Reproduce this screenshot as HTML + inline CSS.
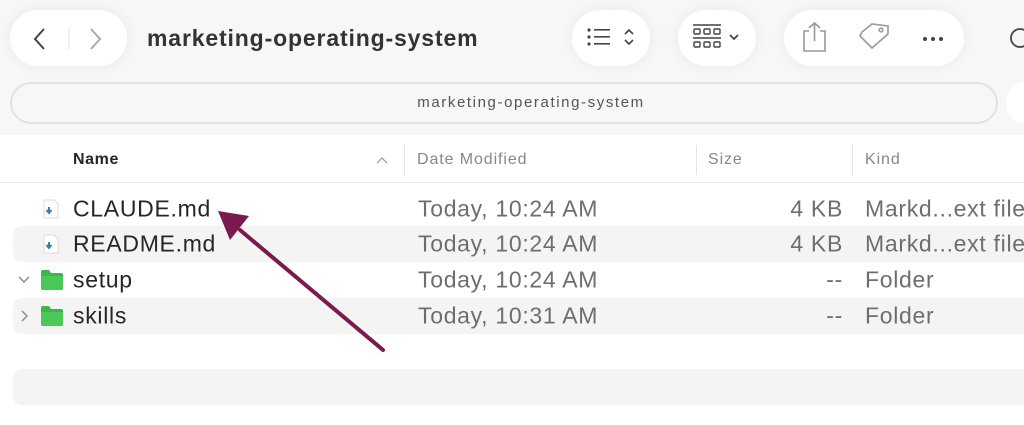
<!DOCTYPE html>
<html><head><style>
body{margin:0;width:1024px;height:425px;background:#fff;font-family:"Liberation Sans",sans-serif;position:relative;overflow:hidden;color:#262626}
.abs{position:absolute}
.pill{position:absolute;background:#fff;border-radius:28px;box-shadow:0 0 14px rgba(0,0,0,0.06)}
.row{position:absolute;left:13px;width:1020px;height:36px;border-radius:9px}
.g{background:#f4f4f4}
.t{position:absolute;font-size:23px;letter-spacing:0.7px;color:#262626;top:50%;transform:translateY(-50%);white-space:nowrap}
.gr{color:#6e6e6e}
.hdr{position:absolute;top:151px;font-size:16px;letter-spacing:0.9px;color:#888}
.sep{position:absolute;top:145px;width:1px;height:30px;background:#e4e4e4}
</style></head><body>
<div class="abs" style="left:0;top:0;width:1024px;height:135px;background:#f7f7f7"></div>
<div class="pill" style="left:10px;top:10px;width:117px;height:56px"></div>
<svg class="abs" style="left:30px;top:26px" width="80" height="26"><path d="M14 3 L5 13 L14 23" fill="none" stroke="#444" stroke-width="2"/><line x1="39" y1="2" x2="39" y2="24" stroke="#e3e3e3"/><path d="M61 3 L70 13 L61 23" fill="none" stroke="#aaa" stroke-width="2"/></svg>
<div class="abs" style="left:147px;top:25px;font-size:23px;letter-spacing:0.85px;font-weight:bold;color:#333">marketing-operating-system</div>
<div class="pill" style="left:572px;top:10px;width:78px;height:56px"></div>
<svg class="abs" style="left:586px;top:27px" width="52" height="22"><g fill="#444"><circle cx="3" cy="3" r="1.6"/><circle cx="3" cy="10" r="1.6"/><circle cx="3" cy="17" r="1.6"/><rect x="8" y="2" width="16" height="1.6"/><rect x="8" y="9" width="16" height="1.6"/><rect x="8" y="16" width="16" height="1.6"/></g><path d="M39 7 L43 3 L47 7 M39 13 L43 17 L47 13" fill="none" stroke="#444" stroke-width="1.6"/></svg>
<div class="pill" style="left:678px;top:10px;width:78px;height:56px"></div>
<svg class="abs" style="left:692px;top:24px" width="50" height="28"><g fill="none" stroke="#444" stroke-width="1.4"><line x1="1" y1="1" x2="29" y2="1"/><rect x="2" y="5" width="6" height="5" rx="1"/><rect x="12" y="5" width="6" height="5" rx="1"/><rect x="22" y="5" width="6" height="5" rx="1"/><line x1="1" y1="14" x2="29" y2="14"/><rect x="2" y="18" width="6" height="5" rx="1"/><rect x="12" y="18" width="6" height="5" rx="1"/><rect x="22" y="18" width="6" height="5" rx="1"/><path d="M38 11 L42 15 L46 11" stroke-width="1.8"/></g></svg>
<div class="pill" style="left:784px;top:10px;width:180px;height:56px"></div>
<svg class="abs" style="left:800px;top:20px" width="160" height="36"><g fill="none" stroke="#999" stroke-width="1.6"><path d="M9 11 H4 V31 H25 V11 H20 M14.5 3 V21 M9 8 L14.5 3 L20 8"/><path d="M62 12 L72 4 L88 6 L88 14 L72 28 L60 16 Z"/><circle cx="81" cy="10" r="1.8"/></g><g fill="#444"><circle cx="125" cy="19" r="2"/><circle cx="133" cy="19" r="2"/><circle cx="141" cy="19" r="2"/></g></svg>
<svg class="abs" style="left:1000px;top:24px" width="24" height="28"><circle cx="20" cy="14" r="9" fill="none" stroke="#444" stroke-width="1.8"/></svg>
<div class="abs" style="left:10px;top:82px;width:988px;height:42px;border:2px solid #e2e2e2;border-radius:22px;background:#f7f7f7;box-sizing:border-box"></div>
<div class="abs" style="left:0;top:94px;width:1062px;text-align:center;font-size:15px;letter-spacing:1.6px;color:#555">marketing-operating-system</div>
<div class="abs" style="left:1006px;top:82px;width:40px;height:42px;background:#fff;border-radius:20px"></div>
<div class="abs" style="left:0;top:135px;width:1024px;height:290px;background:#fff"></div>
<div class="hdr" style="left:73px;color:#262626;font-weight:bold;letter-spacing:0.6px">Name</div>
<svg class="abs" style="left:376px;top:156px" width="12" height="8"><path d="M1 7 L6 2 L11 7" fill="none" stroke="#999" stroke-width="1.2"/></svg>
<div class="sep" style="left:404px"></div><div class="hdr" style="left:417px">Date Modified</div>
<div class="sep" style="left:696px"></div><div class="hdr" style="left:708px">Size</div>
<div class="sep" style="left:852px"></div><div class="hdr" style="left:865px">Kind</div>
<div class="abs" style="left:0;top:182px;width:1024px;height:1px;background:#e6e6e6"></div>

<div class="row" style="top:191px"><svg class="abs" style="left:30px;top:8px" width="16" height="20"><path d="M1 1 H11 L15 5 V19 H1 Z" fill="#fff" stroke="#ddd"/><path d="M6 8 V13 M3.5 11 L6 14 L8.5 11" stroke="#3d7fa6" stroke-width="2" fill="none"/></svg><div class="t" style="left:60px">CLAUDE.md</div><div class="t gr" style="left:405px">Today, 10:24 AM</div><div class="t gr" style="right:190px">4 KB</div><div class="t gr" style="left:852px">Markd...ext file</div></div>
<div class="row g" style="top:226px"><svg class="abs" style="left:30px;top:8px" width="16" height="20"><path d="M1 1 H11 L15 5 V19 H1 Z" fill="#fff" stroke="#ddd"/><path d="M6 8 V13 M3.5 11 L6 14 L8.5 11" stroke="#3d7fa6" stroke-width="2" fill="none"/></svg><div class="t" style="left:60px">README.md</div><div class="t gr" style="left:405px">Today, 10:24 AM</div><div class="t gr" style="right:190px">4 KB</div><div class="t gr" style="left:852px">Markd...ext file</div></div>
<div class="row" style="top:262px"><svg class="abs" style="left:5px;top:14px" width="12" height="8"><path d="M1 1 L6 6 L11 1" fill="none" stroke="#888" stroke-width="1.4"/></svg><svg class="abs" style="left:27px;top:7px" width="24" height="22"><path d="M1 3 Q1 1 3 1 H9 L11 4 H21 Q23 4 23 6 V19 Q23 21 21 21 H3 Q1 21 1 19 Z" fill="#3cb64a"/><rect x="1" y="7" width="22" height="14" rx="2" fill="#4cc85a"/></svg><div class="t" style="left:60px">setup</div><div class="t gr" style="left:405px">Today, 10:24 AM</div><div class="t gr" style="right:190px">--</div><div class="t gr" style="left:852px">Folder</div></div>
<div class="row g" style="top:298px"><svg class="abs" style="left:8px;top:12px" width="8" height="12"><path d="M1 1 L6 6 L1 11" fill="none" stroke="#888" stroke-width="1.4"/></svg><svg class="abs" style="left:27px;top:7px" width="24" height="22"><path d="M1 3 Q1 1 3 1 H9 L11 4 H21 Q23 4 23 6 V19 Q23 21 21 21 H3 Q1 21 1 19 Z" fill="#3cb64a"/><rect x="1" y="7" width="22" height="14" rx="2" fill="#4cc85a"/></svg><div class="t" style="left:60px">skills</div><div class="t gr" style="left:405px">Today, 10:31 AM</div><div class="t gr" style="right:190px">--</div><div class="t gr" style="left:852px">Folder</div></div>
<div class="row g" style="top:369px"></div>

<svg class="abs" style="left:0;top:0" width="1024" height="425"><line x1="383" y1="350" x2="240" y2="230" stroke="#7b1a4d" stroke-width="4" stroke-linecap="round"/><path d="M218 211 L249 216 L230 240 Z" fill="#7b1a4d"/></svg>
</body></html>
